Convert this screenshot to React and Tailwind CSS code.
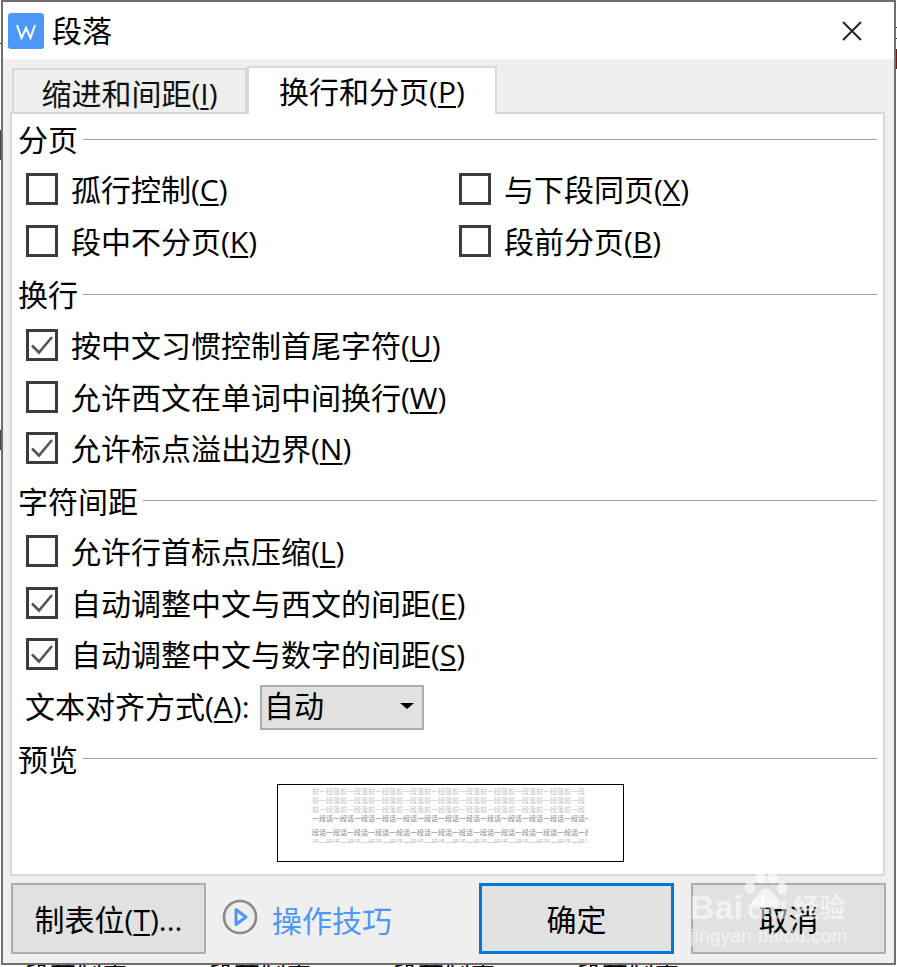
import React from "react";

const FONT = "[font-family:'Open_Sans','Noto_Sans_CJK_SC',sans-serif]";

function Box({ checked }) {
    return (
        <span className="flex h-[32px] w-[32px] shrink-0 items-center justify-center border-[3px] border-[#3c3c3c] bg-white">
            {checked && (
                <svg width="26" height="26" viewBox="0 0 26 26" fill="none">
                    <path d="M3 13.5l7 7L23 5" stroke="#555" strokeWidth="2.6" />
                </svg>
            )}
        </span>
    );
}

function Hot({ label, hot, tail = ")" }) {
    return (
        <>
            {label}(
            <span className="underline decoration-2 underline-offset-[3px]">{hot}</span>
            {tail}
        </>
    );
}

function Check({ label, hot, checked }) {
    return (
        <div className="flex items-center gap-[13px]">
            <Box checked={checked} />
            <span className="whitespace-nowrap pt-[2px]">
                <Hot label={label} hot={hot} />
            </span>
        </div>
    );
}

function Heading({ children, className = "" }) {
    return (
        <div className={`flex items-center pl-[6px] pr-[6px] ${className}`}>
            <span className="whitespace-nowrap pt-[2px]">{children}</span>
            <span className="ml-[5px] h-px flex-1 bg-[#a0a0a0]" />
        </div>
    );
}

function Row({ children, className = "h-[52px]" }) {
    return <div className={`flex items-center pb-[2px] pl-[14px] ${className}`}>{children}</div>;
}

function Button({ children, className = "border-2 border-[#adadad]" }) {
    return (
        <button className={`flex h-[71px] w-[195px] items-center justify-center bg-[#e1e1e1] pt-[3px] text-black ${className}`}>
            {children}
        </button>
    );
}

function Preview() {
    const before = "前一段落".repeat(10).slice(0, 39);
    const para = "一段话".repeat(14);
    return (
        <div className="ml-[265px] h-[78px] w-[347px] border border-black bg-white pl-[34px] pr-[35px] pt-[2px] text-[7px] leading-[9px]">
            <div className="overflow-hidden whitespace-nowrap">
                <div className="overflow-hidden text-[#c4c4c4]">{before}</div>
                <div className="overflow-hidden text-[#c4c4c4]">{before}</div>
                <div className="overflow-hidden text-[#c4c4c4]">{before}</div>
                <div className="overflow-hidden text-[#8a8590]">{para}</div>
                <div className="mt-[5px] overflow-hidden text-[#8a8590]">段话{para}</div>
                <div className="mt-[1px] h-[5px] overflow-hidden text-[#c2b2c8]">话{para}</div>
            </div>
        </div>
    );
}

function Watermark() {
    return (
        <div className="pointer-events-none absolute left-[690px] top-[868px] h-[92px] w-[170px] text-white/60">
            <svg className="absolute left-[53px] top-[2px]" width="46" height="43" viewBox="0 0 60 56" fill="currentColor">
                <ellipse cx="9" cy="23" rx="6.5" ry="8" />
                <ellipse cx="23" cy="9" rx="6.5" ry="9" />
                <ellipse cx="39" cy="9" rx="6.5" ry="9" />
                <ellipse cx="51" cy="24" rx="6.5" ry="8" />
                <path d="M30 24c-8 0-10 9-16 14-5 5-1 15 7 13 6-2 12-2 18 0 8 2 12-8 7-13-6-5-8-14-16-14z" />
            </svg>
            <span className="absolute left-0 top-[19px] whitespace-nowrap font-['Liberation_Sans',sans-serif] text-[34px] font-bold leading-[40px]">
                Bai
            </span>
            <span className="absolute left-[57px] top-[19px] whitespace-nowrap font-['Liberation_Sans',sans-serif] text-[34px] font-bold leading-[40px] text-white/50">
                du
            </span>
            <span className="absolute left-[103px] top-[24px] whitespace-nowrap text-[26px] font-bold leading-[30px]">
                经验
            </span>
            <span className="absolute left-0 top-[56px] whitespace-nowrap font-['Liberation_Sans',sans-serif] text-[18.5px] leading-[24px] tracking-[0.5px]">
                jingyan.baidu.com
            </span>
        </div>
    );
}

export default function App() {
    return (
        <div className={`relative h-[967px] w-[897px] overflow-hidden bg-white text-[30px] leading-[40px] text-black ${FONT}`}>
            {/* dokument w tle, widoczne tylko brzegi */}
            <div className="absolute left-[895px] top-[49px] h-[20px] w-[2px] bg-[#7a1010]" />
            <div className="absolute left-[895px] top-[27px] h-px w-[2px] bg-[#333]" />
            <div className="absolute left-[895px] top-[38px] h-px w-[2px] bg-[#333]" />
            <div className="absolute left-0 top-[43px] h-px w-px bg-[#333]" />
            <div className="absolute left-0 top-[130px] h-[30px] w-px bg-[#444]" />
            <div className="absolute left-0 top-[430px] h-[20px] w-px bg-[#444]" />
            <div className="absolute left-[24px] top-[958px] flex gap-[80px] whitespace-nowrap text-[26px] leading-[36px]">
                <span>段落制表</span>
                <span>段落制表</span>
                <span>段落制表</span>
                <span>段落制表</span>
            </div>

            <div className="relative ml-px flex h-[965px] w-[895px] flex-col border-2 border-[#6f6f6f] bg-[#efefef]">
                <div className="flex h-[57px] shrink-0 items-center bg-white pl-[5px]">
                    <svg width="36" height="36" viewBox="0 0 36 36">
                        <rect width="36" height="36" rx="3" fill="#4d97f8" />
                        <path d="M9 12l4.5 13L18 15l4.5 10L27 12" fill="none" stroke="#fff" strokeWidth="2" />
                    </svg>
                    <span className="ml-[8px]">段落</span>
                    <svg className="ml-auto mr-[32px]" width="20" height="20" viewBox="0 0 20 20">
                        <path d="M1 1l18 18M19 1L1 19" stroke="#222" strokeWidth="2" />
                    </svg>
                </div>

                <div className="flex h-[53px] shrink-0 items-end pl-[9px]">
                    <div className="flex h-[44px] w-[235px] items-center justify-center border-2 border-b-0 border-[#d9d9d9] bg-[#efefef] pt-[6px] text-[#111]">
                        <span>
                            <Hot label="缩进和间距" hot="I" />
                        </span>
                    </div>
                    <div className="relative z-10 -mb-[2px] flex h-[48px] w-[250px] items-center justify-center border-2 border-b-0 border-[#d9d9d9] bg-white pt-[2px]">
                        <span>
                            <Hot label="换行和分页" hot="P" />
                        </span>
                    </div>
                </div>

                <div className="ml-[7px] h-[764px] w-[875px] shrink-0 border-2 border-[#d9d9d9] bg-white">
                    <Heading className="h-[50px]">分页</Heading>
                    <Row>
                        <div className="w-[433px]"><Check label="孤行控制" hot="C" /></div>
                        <Check label="与下段同页" hot="X" />
                    </Row>
                    <Row>
                        <div className="w-[433px]"><Check label="段中不分页" hot="K" /></div>
                        <Check label="段前分页" hot="B" />
                    </Row>
                    <Heading className="h-[52px]">换行</Heading>
                    <Row><Check label="按中文习惯控制首尾字符" hot="U" checked /></Row>
                    <Row className="h-[51px]"><Check label="允许西文在单词中间换行" hot="W" /></Row>
                    <Row><Check label="允许标点溢出边界" hot="N" checked /></Row>
                    <Heading className="h-[51px]">字符间距</Heading>
                    <Row><Check label="允许行首标点压缩" hot="L" /></Row>
                    <Row className="h-[51px]"><Check label="自动调整中文与西文的间距" hot="E" checked /></Row>
                    <Row className="h-[52px]"><Check label="自动调整中文与数字的间距" hot="S" checked /></Row>
                    <div className="flex h-[52px] items-center pl-[13px]">
                        <span className="w-[235px] whitespace-nowrap"><Hot label="文本对齐方式" hot="A" tail="):" /></span>
                        <div className="flex h-[45px] w-[164px] items-center border-2 border-[#adadad] bg-[#e1e1e1] pb-[2px] pl-[2px] pr-[8px]">
                            <span>自动</span>
                            <span className="ml-auto h-0 w-0 border-x-[7px] border-t-[6px] border-x-transparent border-t-black" />
                        </div>
                    </div>
                    <Heading className="h-[51px]">预览</Heading>
                    <Preview />
                </div>

                <div className="flex flex-1 items-start pl-[8px] pr-[8px] pt-[7px]">
                    <Button><Hot label="制表位" hot="T" tail=")..." /></Button>
                    <svg className="ml-[16px] mt-[16px] shrink-0" width="36" height="36" viewBox="0 0 36 36" fill="none">
                        <circle cx="18" cy="18" r="16" stroke="#8a8a8a" strokeWidth="2.6" />
                        <path d="M14 10.5l10 7.5-10 7.5z" stroke="#4d97f8" strokeWidth="3" strokeLinejoin="round" />
                    </svg>
                    <span className="ml-[14px] mt-[18px] whitespace-nowrap text-[#4d97f8]">操作技巧</span>
                    <Button className="ml-auto border-[3px] border-[#0078d7]">确定</Button>
                    <Button className="ml-[17px] border-2 border-[#adadad]">取消</Button>
                </div>
            </div>

            <Watermark />
        </div>
    );
}
